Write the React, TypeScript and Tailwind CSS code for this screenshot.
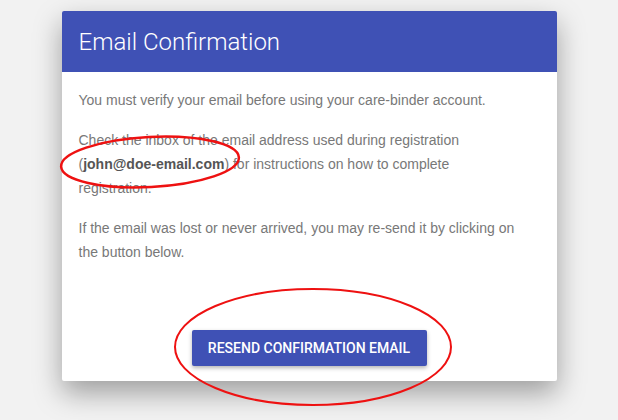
import React from "react";

const App = () => {
  return (
    <div className="relative min-h-[420px] w-full bg-[#f2f2f2] pt-[11px] overflow-hidden">
      <div className="mx-auto w-[495px] bg-white rounded-[2px] shadow-[0_12px_28px_rgba(0,0,0,0.35)]">
        <div className="h-[61px] bg-[#3f51b5] rounded-t-[2px] px-[17px] flex items-center">
          <h1 className="text-[24px] font-light text-white font-['Roboto',sans-serif]">
            Email Confirmation
          </h1>
        </div>

        <div className="px-[17px] pt-[16px] pb-[15px] font-['Liberation_Sans',Arial,sans-serif] text-[14px] leading-[24px] text-[#787878]">
          <div className="w-[445px] flex flex-col gap-4">
            <p>You must verify your email before using your care-binder account.</p>
            <p>
              Check the inbox of the email address used during registration (
              <strong className="font-bold text-[#555555]">john@doe-email.com</strong>) for
              instructions on how to complete registration.
            </p>
            <p>
              If the email was lost or never arrived, you may re-send it by clicking on the
              button below.
            </p>
          </div>

          <div className="mt-[66px] flex justify-center">
            <button
              type="button"
              className="h-9 w-[235px] rounded-[2px] bg-[#3f51b5] text-white text-[14px] font-medium uppercase font-['Roboto',sans-serif] shadow-[0_2px_4px_rgba(0,0,0,0.3)]"
            >
              Resend Confirmation Email
            </button>
          </div>
        </div>
      </div>

      {/* red annotation circles */}
      <svg className="absolute inset-0 pointer-events-none" width="618" height="420">
        <ellipse
          cx="150"
          cy="162"
          rx="89"
          ry="25"
          fill="none"
          stroke="#ee1111"
          strokeWidth="2.5"
          transform="rotate(-3 150 162)"
        />
        <ellipse
          cx="313"
          cy="347"
          rx="138"
          ry="58"
          fill="none"
          stroke="#ee1111"
          strokeWidth="2"
        />
      </svg>
    </div>
  );
};

export default App;
